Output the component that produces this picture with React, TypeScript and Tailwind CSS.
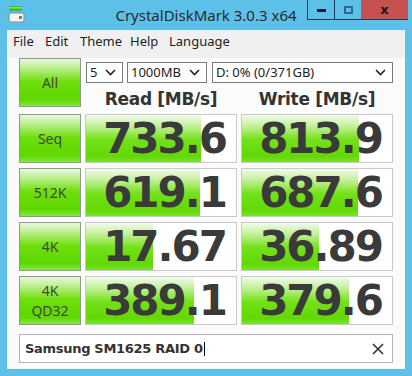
import React from 'react';

type Row = {
  label: string[];
  read: string;
  readW: number;
  write: string;
  writeW: number;
};

const rows: Row[] = [
  { label: ['Seq'], read: '733.6', readW: 115, write: '813.9', writeW: 117 },
  { label: ['512K'], read: '619.1', readW: 114, write: '687.6', writeW: 116 },
  { label: ['4K'], read: '17.67', readW: 67, write: '36.89', writeW: 77 },
  { label: ['4K', 'QD32'], read: '389.1', readW: 108, write: '379.6', writeW: 107 },
];

const greenBtn =
  'bg-[linear-gradient(to_bottom,#eaf8e2_0%,#b4ee80_22%,#6edf0c_48%,#5fd700_86%,#86e64a_100%)]';
const greenBar =
  'bg-[linear-gradient(to_bottom,#f2faee_0%,#c2f096_24%,#74e11a_52%,#62d804_88%,#7ae232_100%)]';

function AppIcon() {
  return (
    <svg width="17" height="17" viewBox="0 0 17 17">
      <rect x="1" y="0" width="13" height="5" rx="1" fill="#3cbe2c" />
      <rect x="1" y="1" width="13" height="1.5" fill="#7ee070" />
      <rect x="1" y="7" width="15" height="9" rx="2" fill="#f4f4f4" stroke="#8a8a8a" />
      <rect x="11" y="10" width="3" height="3" fill="#7a7a7a" />
    </svg>
  );
}

function Chevron() {
  return (
    <svg width="11" height="7" viewBox="0 0 11 7">
      <polyline points="1,1 5.5,5.5 10,1" fill="none" stroke="#222" strokeWidth="1.6" />
    </svg>
  );
}

function Combo({ text, className }: { text: string; className: string }) {
  return (
    <div
      className={`h-[21px] border border-[#7a7a7a] bg-white flex items-center justify-between pl-[3px] pr-[6px] text-[13px] text-[#222] font-['Noto_Sans',sans-serif] ${className}`}
    >
      <span>{text}</span>
      <Chevron />
    </div>
  );
}

function TestButton({ label }: { label: string[] }) {
  return (
    <div
      className={`h-[49px] border border-[#8f9a88] ${greenBtn} flex flex-col items-center justify-center text-[14px] leading-[20px] text-[#3e4a36] font-['Noto_Sans',sans-serif]`}
    >
      {label.map((l) => (
        <span key={l}>{l}</span>
      ))}
    </div>
  );
}

function ValueCell({ value, width }: { value: string; width: number }) {
  return (
    <div className="relative h-[49px] border border-[#c9c9c9] bg-white flex items-center justify-end pr-[10px]">
      <div className={`absolute left-0 top-0 bottom-0 ${greenBar}`} style={{ width }} />
      <span className="relative text-[42px] leading-none font-bold tracking-[-2px] text-[#3a3a3a] font-['DejaVu_Sans',sans-serif]">
        {value}
      </span>
    </div>
  );
}

export default function App() {
  return (
    <div className="w-[412px] h-[376px] bg-[#5dc0e8] flex flex-col overflow-hidden">
      {/* title bar */}
      <div className="h-[30px] grid grid-cols-[1fr_auto_1fr] shrink-0">
        <div className="pl-[8px] pt-[6px]">
          <AppIcon />
        </div>
        <div className="pt-[4px] text-[15px] text-[#2a2a2a] font-['Noto_Sans',sans-serif]">
          CrystalDiskMark 3.0.3 x64
        </div>
        <div className="flex justify-end pr-[4px]">
          <div className="flex h-[20px] border-b border-[#1d3a58]">
            <div className="w-[28px] border-l border-r border-[#1d3a58] flex items-center justify-center">
              <div className="w-[9px] h-[3px] bg-[#0f1f33] mt-[2px]" />
            </div>
            <div className="w-[26px] flex items-center justify-center">
              <div className="w-[9px] h-[8px] border-2 border-[#2d6a98]" />
            </div>
            <div className="w-[47px] bg-[#c75050] flex items-center justify-center text-[#1a1a1a] text-[13px] font-bold font-['DejaVu_Sans',sans-serif]">
              x
            </div>
          </div>
        </div>
      </div>

      {/* body */}
      <div className="flex-1 mx-[7px] mb-[7px] flex flex-col bg-[#fbfbfb]">
        {/* menu */}
        <div className="h-[28px] bg-[#f0f0f0] flex pl-[6px] pt-[2px] text-[13px] text-[#1e1e1e] font-['Noto_Sans',sans-serif]">
          <span className="w-[32px]">File</span>
          <span className="w-[35px]">Edit</span>
          <span className="w-[50px]">Theme</span>
          <span className="w-[39px]">Help</span>
          <span>Language</span>
        </div>

        <div className="pl-[12px] flex flex-col gap-[5px]">
          <div className="grid grid-cols-[62px_152px_152px] gap-x-[4px]">
            <TestButton label={['All']} />
            <div className="col-span-2 flex flex-col">
              <div className="flex pt-[4px]">
                <Combo text="5" className="w-[37px] ml-[1px]" />
                <Combo text="1000MB" className="w-[80px] ml-[4px]" />
                <Combo text="D: 0% (0/371GB)" className="w-[181px] ml-[5px]" />
              </div>
              <div className="grid grid-cols-[152px_152px] gap-x-[4px] pt-[6px] text-[17px] font-bold text-[#333] text-center leading-[20px] font-['DejaVu_Sans',sans-serif] tracking-[-0.3px]">
                <span>Read [MB/s]</span>
                <span>Write [MB/s]</span>
              </div>
            </div>
          </div>

          {rows.map((r) => (
            <div key={r.read} className="grid grid-cols-[62px_152px_152px] gap-x-[4px]">
              <TestButton label={r.label} />
              <ValueCell value={r.read} width={r.readW} />
              <ValueCell value={r.write} width={r.writeW} />
            </div>
          ))}

          <div className="mt-[4px] w-[374px] h-[29px] border border-[#b4b4b4] bg-white flex items-center pl-[5px] pr-[8px]">
            <span className="text-[13px] font-bold text-[#333] tracking-[-0.3px] font-['DejaVu_Sans',sans-serif]">
              Samsung SM1625 RAID 0
            </span>
            <span className="w-px h-[14px] bg-black ml-[1px]" />
            <span className="flex-1" />
            <svg width="12" height="12" viewBox="0 0 12 12">
              <path d="M1 1 L11 11 M11 1 L1 11" stroke="#333" strokeWidth="1.6" />
            </svg>
          </div>
        </div>
      </div>
    </div>
  );
}
